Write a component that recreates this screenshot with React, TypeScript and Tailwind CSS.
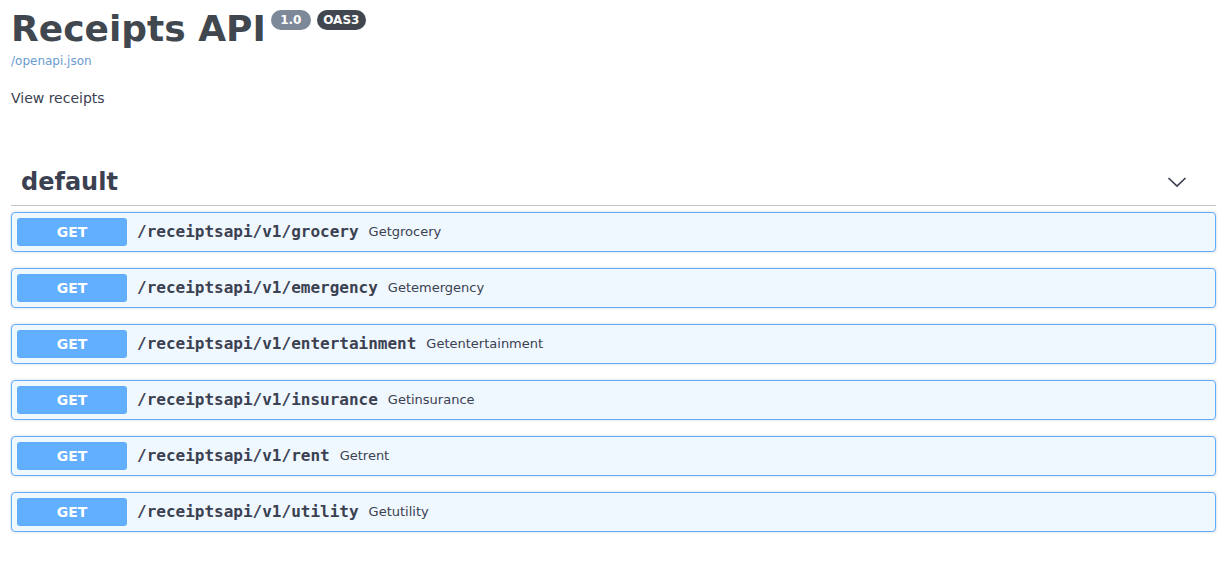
import React from 'react';

const OPS = [
  { path: '/receiptsapi/v1/grocery', summary: 'Getgrocery' },
  { path: '/receiptsapi/v1/emergency', summary: 'Getemergency' },
  { path: '/receiptsapi/v1/entertainment', summary: 'Getentertainment' },
  { path: '/receiptsapi/v1/insurance', summary: 'Getinsurance' },
  { path: '/receiptsapi/v1/rent', summary: 'Getrent' },
  { path: '/receiptsapi/v1/utility', summary: 'Getutility' },
];

const Chevron = () => (
  <svg width="20" height="12" viewBox="0 0 20 12" className="text-[#3b4151]">
    <path d="M1.5 2 L10 10 L18.5 2" fill="none" stroke="currentColor" strokeWidth="1.7" />
  </svg>
);

export default function App() {
  return (
    <div className="min-h-[565px] bg-white pl-[11px] pr-[15px] text-[#3b4151] font-['DejaVu_Sans',sans-serif]">
      {/* Info */}
      <div className="pt-[8px]">
        <div className="flex items-start">
          <h2 className="text-[36px] font-bold leading-[42px] text-[#41474f]">Receipts API</h2>
          <div className="mt-[2px] ml-[5px] flex gap-[6px]">
            <span className="w-[40px] rounded-full bg-[#7d8898] text-center text-[12px] font-bold leading-[20px] text-white">1.0</span>
            <span className="w-[49px] rounded-full bg-[#41464f] text-center text-[12px] font-bold leading-[20px] text-white">OAS3</span>
          </div>
        </div>
        <a className="mt-[4px] block text-[12px] leading-[14px] text-[#6a9bd1]">/openapi.json</a>
        <p className="mt-[22px] text-[14px] leading-[16px]">View receipts</p>
      </div>

      {/* Tag section */}
      <div className="mt-[51px]">
        <div className="flex items-center justify-between border-b border-[#c4c6ca] pt-[11px] pb-[9px] pl-[10px] pr-[29px]">
          <h3 className="text-[24px] font-bold leading-[28px]">default</h3>
          <Chevron />
        </div>

        <div className="mt-[6px] flex flex-col gap-[16px]">
          {OPS.map(op => (
            <div
              key={op.path}
              className="flex items-center rounded-[4px] border border-[#61affe] bg-[#eff7ff] p-[5px] shadow-[0_0_3px_rgba(0,0,0,0.19)]"
            >
              <span className="flex h-[28px] w-[110px] items-center justify-center rounded-[3px] bg-[#61affe] text-[14px] font-bold text-white">
                GET
              </span>
              <span className="ml-[10px] font-['DejaVu_Sans_Mono',monospace] text-[16px] font-bold">{op.path}</span>
              <span className="ml-[10px] text-[13px]">{op.summary}</span>
            </div>
          ))}
        </div>
      </div>
    </div>
  );
}
